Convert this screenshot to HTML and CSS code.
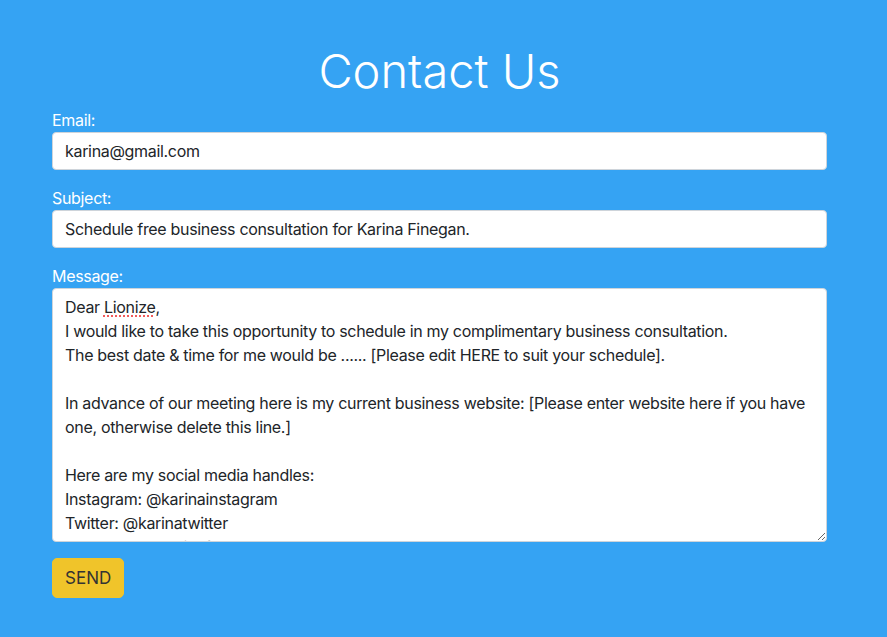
FILE: index.html
```html
<!DOCTYPE html>
<html lang="en">
<head>
<meta charset="utf-8">
<title>Contact Us</title>
<link rel="stylesheet" href="styles.css">
</head>
<body>
<main class="page">
  <h1 class="title">Contact Us</h1>
  <form class="contact-form">
    <div class="form-group">
      <label class="label" for="email">Email:</label>
      <input class="field" id="email" type="email" value="karina@gmail.com">
    </div>
    <div class="form-group">
      <label class="label" for="subject">Subject:</label>
      <input class="field" id="subject" type="text" value="Schedule free business consultation for Karina Finegan.">
    </div>
    <div class="form-group">
      <label class="label">Message:</label>
      <div class="field message" role="textbox" aria-multiline="true">Dear <span class="misspelled">Lionize</span>,
I would like to take this opportunity to schedule in my complimentary business consultation.
The best date &amp; time for me would be ...... [Please edit HERE to suit your schedule].

In advance of our meeting here is my current business website: [Please enter website here if you have one, otherwise delete this line.]

Here are my social media handles:
Instagram: @karinainstagram
Twitter: @karinatwitter
Facebook: @karinafacebook</div>
    </div>
    <button class="send-btn" type="button">SEND</button>
  </form>
</main>
</body>
</html>
```
FILE: styles.css
```css
* { box-sizing: border-box; }
html, body { margin: 0; }
body {
  background: #35a3f3;
  font-family: Inter, "Liberation Sans", sans-serif;
  font-size: 16px;
  line-height: 1.5;
  letter-spacing: -0.32px;
  color: #212529;
  min-height: 637px;
}
.page {
  width: 775px;
  margin-left: 52px;
  padding-top: 43px;
}
.title {
  margin: 0 0 9px;
  text-align: center;
  font-family: Inter, sans-serif;
  font-weight: 300;
  font-size: 47px;
  line-height: 56px;
  letter-spacing: 0;
  color: #fff;
}
.form-group { margin-bottom: 16px; display: flex; flex-direction: column; }
.label {
  color: #fff;
  line-height: 24px;
}
.field {
  display: block;
  width: 100%;
  height: 38px;
  padding: 6px 12px;
  font: inherit;
  letter-spacing: inherit;
  line-height: 24px;
  color: #212529;
  background: #fff;
  border: 1px solid #ced4da;
  border-radius: 4px;
  outline: none;
}
.message {
  height: 254px;
  white-space: pre-wrap;
  overflow: hidden;
  resize: vertical;
}
.misspelled {
  text-decoration: underline dotted #e33;
  text-underline-offset: 3px;
}
.send-btn {
  display: block;
  font: inherit;
  font-size: 17px;
  letter-spacing: 0;
  line-height: 24px;
  padding: 7px 12px;
  height: 40px;
  color: #333;
  background: #f0c42a;
  border: 1px solid #f0c42a;
  border-radius: 5px;
}
```
